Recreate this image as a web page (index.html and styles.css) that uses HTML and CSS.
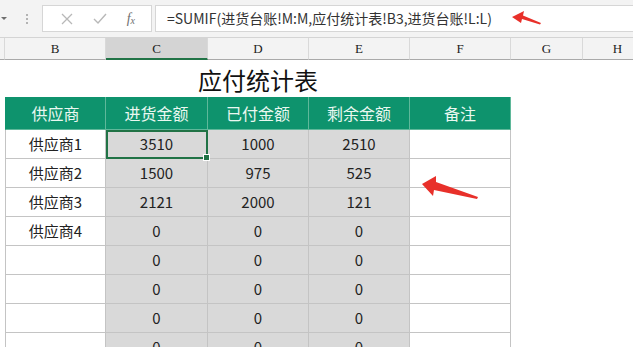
FILE: index.html
```html
<!DOCTYPE html>
<html>
<head>
<meta charset="utf-8">
<link rel="stylesheet" href="styles.css">
</head>
<body>
<div class="app">
  <div class="toolbar">
    <div class="namebox"><span class="tri"></span></div>
    <div class="dots"><i></i><i></i><i></i></div>
    <div class="btns">
      <svg class="ico" width="12" height="12" viewBox="0 0 12 12"><path d="M1 1L11 11M11 1L1 11" stroke="#b8b8b8" stroke-width="1.3" fill="none"/></svg>
      <svg class="ico" width="14" height="12" viewBox="0 0 14 12"><path d="M1 6L5 10L13 1" stroke="#b8b8b8" stroke-width="1.4" fill="none"/></svg>
      <span class="fx">f<sub>x</sub></span>
    </div>
    <div class="formula">=SUMIF(进货台账!M:M,应付统计表!B3,进货台账!L:L)</div>
  </div>
  <div class="sheet">
    <div class="ch"></div>
    <div class="ch">B</div>
    <div class="ch sel">C</div>
    <div class="ch">D</div>
    <div class="ch">E</div>
    <div class="ch">F</div>
    <div class="ch">G</div>
    <div class="ch">H</div>

    <div class="blank"></div>
    <div class="title">应付统计表</div>
    <div class="blank"></div>
    <div class="blank"></div>

    <div class="blank"></div>
    <div class="th first">供应商</div><div class="th">进货金额</div><div class="th">已付金额</div><div class="th">剩余金额</div><div class="th">备注</div>
    <div class="blank"></div><div class="blank"></div>

    <div class="blank"></div>
    <div class="td first">供应商1</div><div class="td g active">3510<span class="handle"></span></div><div class="td g">1000</div><div class="td g">2510</div><div class="td"></div>
    <div class="blank"></div><div class="blank"></div>

    <div class="blank"></div>
    <div class="td first">供应商2</div><div class="td g">1500</div><div class="td g">975</div><div class="td g">525</div><div class="td"></div>
    <div class="blank"></div><div class="blank"></div>

    <div class="blank"></div>
    <div class="td first">供应商3</div><div class="td g">2121</div><div class="td g">2000</div><div class="td g">121</div><div class="td"></div>
    <div class="blank"></div><div class="blank"></div>

    <div class="blank"></div>
    <div class="td first">供应商4</div><div class="td g">0</div><div class="td g">0</div><div class="td g">0</div><div class="td"></div>
    <div class="blank"></div><div class="blank"></div>

    <div class="blank"></div>
    <div class="td first"></div><div class="td g">0</div><div class="td g">0</div><div class="td g">0</div><div class="td"></div>
    <div class="blank"></div><div class="blank"></div>

    <div class="blank"></div>
    <div class="td first"></div><div class="td g">0</div><div class="td g">0</div><div class="td g">0</div><div class="td"></div>
    <div class="blank"></div><div class="blank"></div>

    <div class="blank"></div>
    <div class="td first"></div><div class="td g">0</div><div class="td g">0</div><div class="td g">0</div><div class="td"></div>
    <div class="blank"></div><div class="blank"></div>

    <div class="blank"></div>
    <div class="td first"></div><div class="td g">0</div><div class="td g">0</div><div class="td g">0</div><div class="td"></div>
    <div class="blank"></div><div class="blank"></div>
  </div>
  <svg class="arrows" width="633" height="347" viewBox="0 0 633 347">
    <path d="M512 17 L524 11 L523 15.5 L541 23 L540 24.5 L522 19 L521 23 Z" fill="#e8302a"/>
    <path d="M422 184 L436 176 L436 182 L478 197 L477 199 L434 190 L433 196 Z" fill="#e8302a"/>
  </svg>
</div>
</body>
</html>
```

FILE: styles.css
```css
html, body {
  margin: 0;
  padding: 0;
  background: #ffffff;
  overflow: hidden;
}
.app {
  position: relative;
  width: 633px;
  height: 347px;
  overflow: hidden;
  font-family: "Noto Sans CJK SC", "Noto Sans", sans-serif;
}
.toolbar {
  height: 38px;
  background: #f3f3f3;
  display: flex;
  align-items: center;
  box-sizing: border-box;
  border-bottom: 1px solid #d4d4d4;
}
.namebox {
  width: 12px;
  height: 27px;
  display: flex;
  align-items: center;
  justify-content: center;
}
.tri {
  width: 0;
  height: 0;
  border-left: 3px solid transparent;
  border-right: 3px solid transparent;
  border-top: 3px solid #6e6e6e;
  margin-left: -5px;
}
.dots {
  width: 30px;
  display: flex;
  flex-direction: column;
  align-items: center;
  gap: 2px;
}
.dots i {
  width: 2px;
  height: 2px;
  background: #b3b3b3;
  display: block;
}
.btns {
  width: 110px;
  height: 27px;
  box-sizing: border-box;
  background: #ffffff;
  border: 1px solid #d6d6d6;
  display: flex;
  align-items: center;
  justify-content: space-around;
  padding: 0 6px 0 8px;
}
.fx {
  font-family: "Liberation Serif", serif;
  font-style: italic;
  font-size: 14px;
  color: #707070;
  line-height: 1;
}
.fx sub {
  font-size: 10px;
  vertical-align: -1px;
}
.formula {
  flex: 1;
  margin-left: 3px;
  height: 27px;
  box-sizing: border-box;
  background: #ffffff;
  border: 1px solid #d6d6d6;
  border-right: none;
  padding-left: 11px;
  font-size: 14px;
  color: #333333;
  line-height: 25px;
  white-space: nowrap;
}
.sheet {
  display: grid;
  grid-template-columns: 5px 101px 102px 101px 101px 101px 72px 70px;
  grid-template-rows: 22px 37px 33px repeat(8, 29px);
}
.ch {
  background: #f3f3f3;
  border-bottom: 1px solid #a9a9a9;
  border-right: 1px solid #d9d9d9;
  box-sizing: border-box;
  font-family: "Liberation Serif", serif;
  font-size: 13px;
  color: #222;
  text-align: center;
  line-height: 22px;
}
.ch.sel {
  background: #d4d4d4;
  border-bottom: 2px solid #217346;
  line-height: 21px;
}
.blank {
  background: #ffffff;
}
.title {
  grid-column: 2 / 7;
  text-align: center;
  font-size: 24px;
  line-height: 37px;
  color: #111;
  padding-top: 1px;
}
.th, .td {
  box-sizing: border-box;
  border-right: 1px solid #c4c4c4;
  border-bottom: 1px solid #c4c4c4;
  text-align: center;
  font-size: 15px;
  line-height: 28px;
  color: #222;
  position: relative;
}
.th {
  background: #0e936d;
  color: #eaf8f1;
  font-size: 16px;
  line-height: 32px;
  border-color: #5fb89a;
}
.td.first {
  border-left: 1px solid #c4c4c4;
}
.th.first {
  border-left: 1px solid #0e936d;
}
.td.g {
  background: #d9d9d9;
}
.td.active {
  outline: 2px solid #217346;
  outline-offset: -2px;
  z-index: 1;
}
.handle {
  position: absolute;
  right: -3px;
  bottom: -3px;
  width: 5px;
  height: 5px;
  background: #217346;
  border: 1px solid #ffffff;
}
.arrows {
  position: absolute;
  left: 0;
  top: 0;
  pointer-events: none;
}
```
